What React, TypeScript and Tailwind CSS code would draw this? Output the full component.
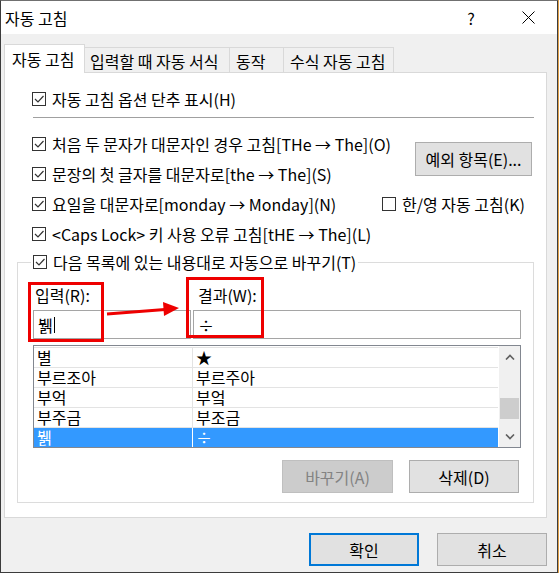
import React from "react";

const Check = ({ checked = true }: { checked?: boolean }) => (
  <span className="w-[14px] h-[14px] border border-[#333333] bg-white flex items-center justify-center shrink-0">
    {checked && (
      <svg width="12" height="12" viewBox="0 0 12 12">
        <path d="M2 6 L5 9 L10.5 3" fill="none" stroke="#333333" strokeWidth="1.2" />
      </svg>
    )}
  </span>
);

const CheckRow = ({ label, checked = true }: { label: string; checked?: boolean }) => (
  <div className="flex items-center gap-[6px] whitespace-nowrap h-full">
    <Check checked={checked} />
    <span>{label}</span>
  </div>
);

const rows: [string, string][] = [
  ["별", "★"],
  ["부르조아", "부르주아"],
  ["부억", "부엌"],
  ["부주금", "부조금"],
];

export default function App() {
  return (
    <div className="w-[559px] h-[573px] bg-[#e0a04a] font-['Noto_Sans_CJK_KR','Noto_Sans',sans-serif] text-[16px] leading-[20px] text-black relative overflow-hidden">
      <div className="w-[558px] h-[573px] border border-[#3c3c3c] border-t-[#707070] bg-[#f0f0f0] flex flex-col">
        {/* title bar */}
        <div className="h-[33px] bg-white flex items-center shrink-0">
          <span className="pl-[4px]">자동 고침</span>
          <span className="ml-auto w-[14px] text-center text-[16px]">?</span>
          <span className="ml-[44px] mr-[22px] flex items-center">
            <svg width="13" height="13" viewBox="0 0 13 13">
              <path d="M0.5 0.5 L12.5 12.5 M12.5 0.5 L0.5 12.5" stroke="#000" strokeWidth="1" />
            </svg>
          </span>
        </div>

        <div className="pl-[3px] pr-[10px] flex flex-col">
          {/* tabs */}
          <div className="mt-[10px] h-[29px] -mb-[1px] flex items-start relative z-10">
            <div className="w-[81px] h-[29px] bg-white border border-b-0 border-[#d9d9d9] pl-[7px] pt-[4px] whitespace-nowrap">
              자동 고침
            </div>
            <div className="mt-[3px] w-[145px] h-[25px] border-t border-r border-[#d9d9d9] bg-[#f0f0f0] pl-[5px] pt-[3px] whitespace-nowrap">
              입력할 때 자동 서식
            </div>
            <div className="mt-[3px] w-[54px] h-[25px] border-t border-r border-[#d9d9d9] bg-[#f0f0f0] pl-[6px] pt-[3px] whitespace-nowrap">
              동작
            </div>
            <div className="mt-[3px] w-[110px] h-[25px] border-t border-r border-[#d9d9d9] bg-[#f0f0f0] pl-[6px] pt-[3px] whitespace-nowrap">
              수식 자동 고침
            </div>
          </div>

          {/* panel */}
          <div className="h-[446px] bg-white border border-[#d9d9d9] flex flex-col pt-[11px]">
            <div className="ml-[27px] h-[30px]">
              <CheckRow label="자동 고침 옵션 단추 표시(H)" />
            </div>
            <div className="ml-[28px] mr-[12px] mt-[3px] h-px bg-[#a0a0a0]" />

            <div className="ml-[27px] mt-[11px] grid grid-cols-[350px_1fr] grid-rows-[30px_30px_30px_30px]">
              <div>
                <CheckRow label="처음 두 문자가 대문자인 경우 고침[THe → The](O)" />
              </div>
              <div className="row-span-2 flex items-center">
                <button className="ml-[33px] w-[117px] h-[34px] bg-[#e1e1e1] border border-[#adadad] text-center whitespace-nowrap">
                  예외 항목(E)...
                </button>
              </div>
              <div>
                <CheckRow label="문장의 첫 글자를 대문자로[the → The](S)" />
              </div>
              <div>
                <CheckRow label="요일을 대문자로[monday → Monday](N)" />
              </div>
              <div>
                <CheckRow label="한/영 자동 고침(K)" checked={false} />
              </div>
              <div className="col-span-2">
                <CheckRow label="<Caps Lock> 키 사용 오류 고침[tHE → The](L)" />
              </div>
            </div>

            <fieldset className="ml-[12px] mr-[12px] mt-[3px] border border-[#dcdcdc] pl-[15px] pr-[12px] pb-[9px]">
              <legend className="-ml-[2px] px-[2px] h-[20px]">
                <CheckRow label="다음 목록에 있는 내용대로 자동으로 바꾸기(T)" />
              </legend>
              <div className="pt-[13px] grid grid-cols-[158px_1fr] gap-x-[2px]">
                <div className="pl-[2px] h-[20px]">입력(R):</div>
                <div className="pl-[5px] h-[20px]">결과(W):</div>
                <div className="mt-[5px] h-[29px] border border-[#a5a5a5] flex items-center pl-[4px]">
                  <span>뷁</span>
                  <span className="ml-[1px] w-px h-[16px] bg-black" />
                </div>
                <div className="mt-[5px] h-[29px] border border-[#a5a5a5] flex items-center pl-[4px]">
                  ÷
                </div>
              </div>

              {/* list */}
              <div className="mt-[6px] h-[103px] border border-[#828790] flex">
                <div className="flex-1 flex flex-col border-t border-[#e3e3e3] mt-[1px]">
                  {rows.map(([a, b]) => (
                    <div key={a} className="h-[20px] flex border-b border-[#e3e3e3]">
                      <div className="w-[159px] border-r border-[#e3e3e3] pl-[3px] leading-[19px]">{a}</div>
                      <div className="flex-1 pl-[3px] leading-[19px]">{b}</div>
                    </div>
                  ))}
                  <div className="h-[20px] flex bg-[#3399ff] text-white">
                    <div className="w-[159px] border-r border-white pl-[3px] leading-[19px]">뷁</div>
                    <div className="flex-1 pl-[3px] leading-[19px]">÷</div>
                  </div>
                </div>
                <div className="w-[21px] bg-[#f0f0f0] flex flex-col ml-px">
                  <div className="h-[21px] flex items-center justify-center">
                    <svg width="10" height="6" viewBox="0 0 10 6">
                      <path d="M1 5.5 L5 1.5 L9 5.5" fill="none" stroke="#606060" strokeWidth="1.6" />
                    </svg>
                  </div>
                  <div className="flex-1 px-[1px]">
                    <div className="mt-[31px] h-[21px] bg-[#cdcdcd]" />
                  </div>
                  <div className="h-[21px] flex items-center justify-center">
                    <svg width="10" height="6" viewBox="0 0 10 6">
                      <path d="M1 0.5 L5 4.5 L9 0.5" fill="none" stroke="#606060" strokeWidth="1.6" />
                    </svg>
                  </div>
                </div>
              </div>

              <div className="mt-[12px] mr-[2px] flex justify-end gap-[16px]">
                <button className="w-[111px] h-[33px] bg-[#cccccc] border border-[#bfbfbf] text-[#838383]">
                  바꾸기(A)
                </button>
                <button className="w-[110px] h-[33px] bg-[#e1e1e1] border border-[#adadad]">
                  삭제(D)
                </button>
              </div>
            </fieldset>
          </div>

          {/* bottom buttons */}
          <div className="mt-[15px] flex justify-end gap-[18px]">
            <button className="w-[110px] h-[33px] bg-[#e1e1e1] border-2 border-[#0078d7]">확인</button>
            <button className="w-[110px] h-[33px] bg-[#e1e1e1] border border-[#adadad]">취소</button>
          </div>
        </div>
      </div>

      {/* annotations */}
      <svg className="absolute inset-0 pointer-events-none" width="559" height="573" viewBox="0 0 559 573">
        <rect x="29.5" y="283.5" width="73" height="57" fill="none" stroke="#ee0000" strokeWidth="3" />
        <rect x="187.5" y="278.5" width="75" height="58" fill="none" stroke="#ee0000" strokeWidth="3" />
        <path d="M107 314 L165 309.5" stroke="#ee0000" strokeWidth="3" fill="none" />
        <path d="M163 302 L179 308 L164 316 Z" fill="#ee0000" />
      </svg>
    </div>
  );
}
